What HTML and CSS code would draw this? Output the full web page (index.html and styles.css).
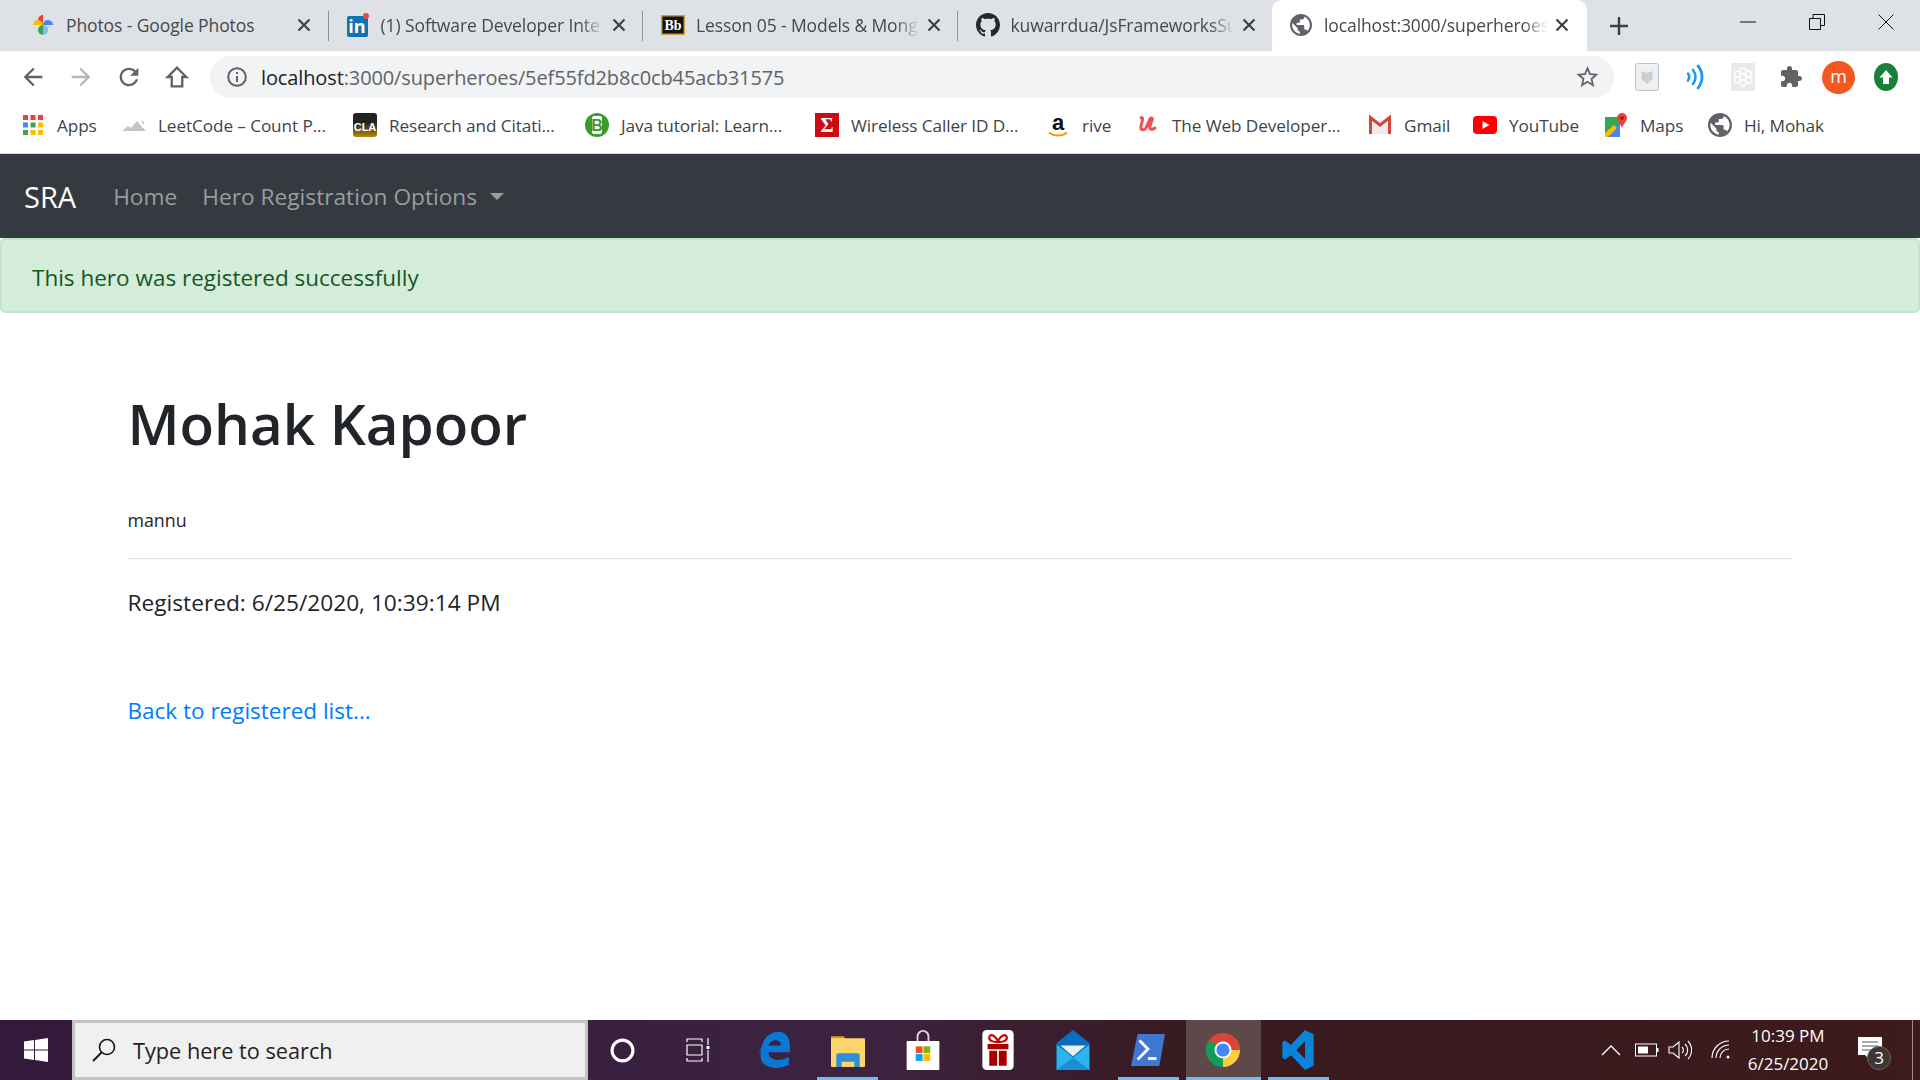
FILE: index.html
```html
<!DOCTYPE html>
<html lang="en">
<head>
    <meta charset="UTF-8">
    <title>SRA</title>
    <link rel="stylesheet" href="styles.css">
</head>
<body>
<svg class="defs" width="0" height="0">
    <symbol id="globe" viewBox="2 2 20 20"><path d="M12 2C6.48 2 2 6.48 2 12s4.48 10 10 10 10-4.48 10-10S17.52 2 12 2zm-1 17.93c-3.95-.49-7-3.85-7-7.93 0-.62.08-1.21.21-1.79L9 15v1c0 1.1.9 2 2 2v1.93zm6.9-2.54c-.26-.81-1-1.39-1.9-1.39h-1v-3c0-.55-.45-1-1-1H8v-2h2c.55 0 1-.45 1-1V7h2c1.1 0 2-.9 2-2v-.41c2.93 1.19 5 4.06 5 7.41 0 2.08-.8 3.97-2.1 5.39z"/></symbol>
    <symbol id="close" viewBox="0 0 14 14"><path d="M1.5 1.5l11 11M12.5 1.5l-11 11" fill="none" stroke="currentColor" stroke-width="2.2"/></symbol>
</svg>

<!-- tabs -->
<div class="tabstrip">
    <div class="tab">
        <svg class="tab-icon" viewBox="0 0 22 22">
            <path d="M11 11V1a5 5 0 0 0-5 5 5 5 0 0 0 5 5z" fill="#ea4335"/>
            <path d="M11 11h10a5 5 0 0 0-5-5 5 5 0 0 0-5 5z" fill="#4285f4"/>
            <path d="M11 11v10a5 5 0 0 0 5-5 5 5 0 0 0-5-5z" fill="#8ab4f8"/>
            <path d="M11 11v10a5 5 0 0 1-5-5 5 5 0 0 1 5-5z" fill="#34a853"/>
            <path d="M11 11H1a5 5 0 0 1 5-5 5 5 0 0 1 5 5z" fill="#fbbc04"/>
        </svg>
        <span class="tab-title">Photos - Google Photos</span>
        <svg class="tab-close"><use href="#close"/></svg>
    </div>
    <div class="tab">
        <svg class="tab-icon" viewBox="0 0 22 24">
            <rect x="0" y="3" width="21" height="21" rx="2" fill="#0a75b5"/>
            <text x="10" y="20" class="svg-in">in</text>
            <circle cx="19" cy="3" r="3" fill="#e8483a"/>
        </svg>
        <span class="tab-title tab-fade">(1) Software Developer Inte</span>
        <svg class="tab-close"><use href="#close"/></svg>
    </div>
    <div class="tab">
        <svg class="tab-icon tab-icon-wide" viewBox="0 0 24 20">
            <rect width="24" height="20" fill="#c9a13b"/>
            <rect x="1.5" y="1.5" width="21" height="17" fill="#111"/>
            <text x="12" y="15" class="svg-bb">Bb</text>
        </svg>
        <span class="tab-title tab-fade">Lesson 05 - Models &amp; Mong</span>
        <svg class="tab-close"><use href="#close"/></svg>
    </div>
    <div class="tab">
        <svg class="tab-icon tab-icon-wide" viewBox="0 0 16 16"><path fill="#24292e" d="M8 0C3.58 0 0 3.58 0 8c0 3.54 2.29 6.53 5.47 7.59.4.07.55-.17.55-.38 0-.19-.01-.82-.01-1.49-2.01.37-2.53-.49-2.69-.94-.09-.23-.48-.94-.82-1.13-.28-.15-.68-.52-.01-.53.63-.01 1.08.58 1.23.82.72 1.21 1.87.87 2.33.66.07-.52.28-.87.51-1.07-1.78-.2-3.64-.89-3.64-3.95 0-.87.31-1.59.82-2.15-.08-.2-.36-1.02.08-2.12 0 0 .67-.21 2.2.82.64-.18 1.32-.27 2-.27.68 0 1.36.09 2 .27 1.53-1.04 2.2-.82 2.2-.82.44 1.1.16 1.92.08 2.12.51.56.82 1.27.82 2.15 0 3.07-1.87 3.75-3.65 3.95.29.25.54.73.54 1.48 0 1.07-.01 1.93-.01 2.2 0 .21.15.46.55.38A8.013 8.013 0 0016 8c0-4.42-3.58-8-8-8z"/></svg>
        <span class="tab-title tab-fade">kuwarrdua/JsFrameworksSu</span>
        <svg class="tab-close"><use href="#close"/></svg>
    </div>
    <div class="tab tab-active">
        <svg class="tab-icon tab-globe"><use href="#globe"/></svg>
        <span class="tab-title tab-fade">localhost:3000/superheroes</span>
        <svg class="tab-close"><use href="#close"/></svg>
    </div>
    <svg class="new-tab" viewBox="0 0 18 18"><path d="M9 0v18M0 9h18" stroke="#3c4043" stroke-width="2.4" fill="none"/></svg>
    <div class="win-controls">
        <svg viewBox="0 0 16 16"><path d="M0 8h16" stroke="#111" fill="none"/></svg>
        <svg viewBox="0 0 16 16"><path d="M.5 4.500h11v11H.5zM4 4.500V.5h11.500v11h-4" stroke="#111" fill="none"/></svg>
        <svg viewBox="0 0 16 16"><path d="M.5.5l15 15M15.500.5l-15 15" stroke="#111" fill="none"/></svg>
    </div>
</div>

<!-- address bar -->
<div class="toolbar">
    <div class="nav-btns">
        <svg viewBox="0 0 24 24"><path fill="#5f6368" d="M20 11H7.83l5.59-5.59L12 4l-8 8 8 8 1.41-1.41L7.83 13H20v-2z"/></svg>
        <svg viewBox="0 0 24 24"><path fill="#b4b7ba" d="M12 4l-1.41 1.41L16.17 11H4v2h12.17l-5.58 5.59L12 20l8-8z"/></svg>
        <svg viewBox="0 0 24 24"><path fill="#5f6368" d="M17.65 6.35C16.2 4.9 14.21 4 12 4c-4.42 0-7.99 3.58-7.99 8s3.57 8 7.99 8c3.73 0 6.84-2.55 7.73-6h-2.08c-.82 2.33-3.04 4-5.65 4-3.31 0-6-2.69-6-6s2.69-6 6-6c1.66 0 3.14.69 4.22 1.78L13 11h7V4l-2.35 2.35z"/></svg>
        <svg viewBox="0 0 24 24"><path fill="none" stroke="#5f6368" stroke-width="2" d="M12 4L4 12h3.500v8h9v-8H20z"/></svg>
    </div>
    <div class="omnibox">
        <svg class="info-icon" viewBox="0 0 20 20"><circle cx="10" cy="10" r="8.800" fill="none" stroke="#5f6368" stroke-width="2"/><path d="M9 9h2v6H9zM9 5h2v2H9z" fill="#5f6368"/></svg>
        <span class="url"><span class="url-host">localhost</span>:3000/superheroes/5ef55fd2b8c0cb45acb31575</span>
        <svg class="star" viewBox="2 2 20 20"><path fill="#5f6368" d="M22 9.240l-7.190-.62L12 2 9.190 8.630 2 9.240l5.460 4.730L5.820 21 12 17.270 18.180 21l-1.630-7.030L22 9.240zM12 15.400l-3.760 2.270 1-4.280-3.320-2.880 4.380-.38L12 6.100l1.710 4.040 4.380.38-3.320 2.880 1 4.280L12 15.400z"/></svg>
    </div>
    <div class="extensions">
        <svg viewBox="0 0 24 28">
            <rect x=".5" y=".5" width="23" height="27" rx="2" fill="#eef0f1" stroke="#bcc4c9"/>
            <path d="M6.500 8l5.500 2 5.500-2v8L12 21l-5.500-5z" fill="#c9cfd3"/>
        </svg>
        <svg viewBox="0 0 24 28" fill="none" stroke="#1a9af2" stroke-linecap="round">
            <path d="M5 10.500a6 6 0 0 1 0 7" stroke-width="2.600"/>
            <path d="M10 7a11 11 0 0 1 0 14" stroke-width="2.600"/>
            <path d="M15 3a17 17 0 0 1 0 22" stroke-width="2.800"/>
        </svg>
        <svg viewBox="0 0 24 28">
            <rect width="24" height="28" rx="1" fill="#e8eaeb"/>
            <g fill="none" stroke="#fff" stroke-width="1.300">
                <circle cx="12" cy="14" r="3"/><circle cx="12" cy="8" r="3"/><circle cx="12" cy="20" r="3"/>
                <circle cx="6.500" cy="11" r="3"/><circle cx="17.500" cy="11" r="3"/><circle cx="6.500" cy="17" r="3"/><circle cx="17.500" cy="17" r="3"/>
            </g>
        </svg>
        <svg viewBox="0 -2 24 28"><path fill="#5f6368" d="M20.500 11H19V7c0-1.100-.9-2-2-2h-4V3.500C13 2.120 11.880 1 10.500 1S8 2.120 8 3.500V5H4c-1.100 0-1.990.9-1.990 2v3.800H3.500c1.490 0 2.700 1.210 2.700 2.700s-1.210 2.700-2.700 2.700H2V20c0 1.100.9 2 2 2h3.800v-1.500c0-1.490 1.210-2.700 2.700-2.700 1.490 0 2.700 1.210 2.700 2.700V22H17c1.100 0 2-.9 2-2v-4h1.500c1.380 0 2.500-1.120 2.500-2.500S21.880 11 20.500 11z"/></svg>
        <span class="avatar">m</span>
        <svg viewBox="0 0 24 28"><ellipse cx="12" cy="14" rx="12" ry="14" fill="#188038"/><path d="M12 7l6.500 7.500H15V21H9v-6.500H5.500z" fill="#fff"/></svg>
    </div>
</div>

<!-- bookmarks -->
<div class="bookmarks">
    <a class="bm">
        <svg class="bm-icon" viewBox="0 0 20 20">
            <g fill="#ea4335"><rect width="5" height="5"/><rect x="7.500" width="5" height="5"/><rect x="15" width="5" height="5"/></g>
            <g fill="#4285f4"><rect y="7.500" width="5" height="5"/><rect x="7.500" y="7.500" width="5" height="5" fill="#34a853"/><rect x="15" y="7.500" width="5" height="5" fill="#fbbc04"/></g>
            <g fill="#34a853"><rect y="15" width="5" height="5"/><rect x="7.500" y="15" width="5" height="5" fill="#fbbc04"/><rect x="15" y="15" width="5" height="5" fill="#fbbc04"/></g>
        </svg>
        <span>Apps</span>
    </a>
    <a class="bm">
        <svg class="bm-icon bm-icon-wide" viewBox="0 -6 24 24"><path d="M0 12l6-5 3 2 6-7 5 6 4 4z" fill="#c3c6c9"/><path d="M20 2l2 3" stroke="#6fb6c9" fill="none"/></svg>
        <span>LeetCode – Count P...</span>
    </a>
    <a class="bm">
        <svg class="bm-icon bm-icon-wide" viewBox="0 0 24 24"><defs><linearGradient id="cla" x2="0" y2="1"><stop offset=".4" stop-color="#222"/><stop offset="1" stop-color="#b8860b"/></linearGradient></defs><rect width="24" height="24" rx="3" fill="url(#cla)"/><text x="12" y="18" class="svg-cla">CLA</text></svg>
        <span>Research and Citati...</span>
    </a>
    <a class="bm">
        <svg class="bm-icon bm-icon-wide" viewBox="0 0 24 24"><circle cx="12" cy="12" r="12" fill="#3c9a2f"/><rect x="7" y="3" width="10" height="18" rx="2" fill="#fff"/><text x="12" y="18" class="svg-b">B</text></svg>
        <span>Java tutorial: Learn...</span>
    </a>
    <a class="bm">
        <svg class="bm-icon bm-icon-wide" viewBox="0 0 24 24"><rect width="24" height="24" fill="#cc0a12"/><text x="12" y="19" class="svg-sigma">Σ</text></svg>
        <span>Wireless Caller ID D...</span>
    </a>
    <a class="bm">
        <svg class="bm-icon bm-icon-tall" viewBox="0 0 20 26"><text x="10" y="17" class="svg-amazon">a</text><path d="M1 20c5 4 13 4 18 0" stroke="#f90" stroke-width="2" fill="none"/></svg>
        <span>rive</span>
    </a>
    <a class="bm">
        <svg class="bm-icon" viewBox="0 0 20 20"><path d="M3 3c1-1 2 0 1.500 2L3 11c-1 4 3 5 5 2l4-9c1-2 3-1 2 1l-2 6c-1 4 2 4 5 2" fill="none" stroke="#ec5252" stroke-width="3" stroke-linecap="round"/></svg>
        <span>The Web Developer...</span>
    </a>
    <a class="bm">
        <svg class="bm-icon bm-icon-wide" viewBox="-1 -2 24 24"><path d="M2 3l9 8 9-8v16H2z" fill="#ececec"/><path d="M1.500 19V2.500L11 10l9.500-7.500V19" fill="none" stroke="#d44638" stroke-width="3"/></svg>
        <span>Gmail</span>
    </a>
    <a class="bm">
        <svg class="bm-icon bm-icon-wide" viewBox="0 -3 24 24"><rect width="24" height="18" rx="4" fill="#f00"/><path d="M9.500 5l7 4-7 4z" fill="#fff"/></svg>
        <span>YouTube</span>
    </a>
    <a class="bm">
        <svg class="bm-icon bm-icon-wide" viewBox="-1 0 24 24">
            <path d="M0 4h15v20H0z" fill="#35a853"/><path d="M0 24l15-14v14z" fill="#4285f4"/><path d="M0 20l9-8 3 3-9 9H0z" fill="#fbbc04"/>
            <path d="M17 0a5 5 0 0 1 5 5c0 3-3 5-5 10-2-5-5-7-5-10a5 5 0 0 1 5-5z" fill="#ea4335"/><circle cx="17" cy="5" r="1.800" fill="#8b1a12"/>
        </svg>
        <span>Maps</span>
    </a>
    <a class="bm">
        <svg class="bm-icon bm-icon-wide tab-globe"><use href="#globe"/></svg>
        <span>Hi, Mohak</span>
    </a>
</div>

<!-- the page -->
<nav class="navbar">
    <a class="brand">SRA</a>
    <a class="nav-link">Home</a>
    <a class="nav-link dropdown">Hero Registration Options</a>
</nav>
<div class="alert">This hero was registered successfully</div>
<main class="container">
    <h1>Mohak Kapoor</h1>
    <p class="alias">mannu</p>
    <hr>
    <p class="registered">Registered: 6/25/2020, 10:39:14 PM</p>
    <a class="back-link">Back to registered list...</a>
</main>

<!-- windows taskbar -->
<footer class="taskbar">
    <svg class="start" viewBox="0 0 24 24"><path fill="#fff" d="M0 3.500l10-1.400V11.500H0zM11 2l13-2v11.500H11zM0 12.500h10v9.400L0 20.500zM11 12.500h13V24l-13-2z"/></svg>
    <div class="search">
        <svg class="search-icon" viewBox="0 0 24 24"><circle cx="15" cy="9" r="7.500" fill="none" stroke="#111" stroke-width="1.600"/><path d="M9.500 14.500L1 23" stroke="#111" stroke-width="1.800"/></svg>
        <span>Type here to search</span>
    </div>
    <div class="task-icons">
        <div class="task"><svg class="ti-small" viewBox="0 0 24 24"><circle cx="12" cy="12" r="10" fill="none" stroke="#fff" stroke-width="3"/></svg></div>
        <div class="task"><svg class="ti" viewBox="0 0 24 24" fill="none" stroke="#fff" stroke-width="1.200"><path d="M1 4V1h15v3M1 20v3h15v-3M1 7h15v10H1zM22 0v7M22 12v12"/><rect x="20.500" y="8" width="3" height="3" fill="#fff" stroke="none"/></svg></div>
        <div class="task"><svg class="ti-big" viewBox="0 0 30 34"><path d="M5 14C7 5 14 1 20 1c6 0 10 5 10 13v5H11c0 7 9 9 18 4v7c-9 5-25 4-25-8 0-3 1-5 3-7-1 1-3 3-4 5 0-2 1-4 2-6zm6-1h11c0-6-9-6-11 0z" fill="#0a78d7"/></svg></div>
        <div class="task task-open"><svg class="ti-big" viewBox="0 0 32 32"><path d="M0 3h12l2 3H0z" fill="#dc9f12"/><rect y="5" width="32" height="27" rx="1" fill="#fcd56b"/><path d="M5 32V21a2 2 0 0 1 2-2h18a2 2 0 0 1 2 2v11h-5v-5H10v5z" fill="#2e8fd8"/></svg></div>
        <div class="task"><svg class="ti-big" viewBox="0 0 36 44">
            <path d="M12 14V7a6 6 0 0 1 12 0v7" fill="none" stroke="#ddd" stroke-width="2"/>
            <rect y="12" width="36" height="32" rx="1" fill="#fff"/>
            <rect x="10" y="18" width="7.500" height="7.500" fill="#f25022"/><rect x="18.500" y="18" width="7.500" height="7.500" fill="#7fba00"/>
            <rect x="10" y="26.500" width="7.500" height="7.500" fill="#00a4ef"/><rect x="18.500" y="26.500" width="7.500" height="7.500" fill="#ffb900"/>
        </svg></div>
        <div class="task"><svg class="ti-big" viewBox="0 0 36 46">
            <rect width="36" height="46" rx="5" fill="#fff"/>
            <path d="M6 16h24v6H6zM8 24h9v17H8zM19 24h9v17h-9z" fill="#a80000"/>
            <path d="M18 14c-2-8-9-10-10-6s4 6 10 6c6 0 11-2 10-6s-8-2-10 6z" fill="none" stroke="#c00" stroke-width="2.500"/>
        </svg></div>
        <div class="task"><svg class="ti-big" viewBox="0 0 36 44">
            <path d="M0 14L18 0l18 14v30H0z" fill="#0a6cbd"/>
            <path d="M4 17h28l-14 12z" fill="#eee"/>
            <path d="M0 16l18 14 18-14v28H0z" fill="#2cb5ea"/>
            <path d="M36 44H0l18-14z" fill="#1a8fd6"/>
        </svg></div>
        <div class="task task-open"><svg class="ti-big" viewBox="0 0 36 36"><path d="M7 1h29l-6 34H0z" fill="#3f77d2"/><path d="M9 8l9 9-11 11" fill="none" stroke="#fff" stroke-width="3"/><path d="M18 27h9" stroke="#fff" stroke-width="3"/></svg></div>
        <div class="task task-open task-active"><svg class="ti-big" viewBox="0 0 32 32">
            <circle cx="16" cy="16" r="16" fill="#db4437"/>
            <path d="M16 16L2.100 24A16 16 0 0 1 3 6.500z" fill="#0f9d58"/>
            <path d="M16 16l-13.900 8A16 16 0 0 0 16 32l8-14z" fill="#0f9d58"/>
            <path d="M16 16h16a16 16 0 0 1-16 16z" fill="#ffcd40"/>
            <path d="M16 9h15l1 7H16z" fill="#db4437"/>
            <circle cx="16" cy="16" r="8" fill="#fff"/><circle cx="16" cy="16" r="6.200" fill="#4285f4"/>
        </svg></div>
        <div class="task task-open"><svg class="ti-big" viewBox="0 0 36 46"><path d="M26 0l10 5v36l-10 5-16-17-7 5-3-2V14l3-2 7 5zM26 13l-10 10 10 10z" fill="#0a84d8"/></svg></div>
    </div>
    <div class="tray">
        <svg class="tray-up" viewBox="0 0 20 12"><path d="M1 11l9-9 9 9" fill="none" stroke="#fff" stroke-width="1.300"/></svg>
        <svg class="tray-batt" viewBox="0 0 24 14"><rect x=".5" y="1" width="21" height="12" fill="none" stroke="#fff"/><rect x="3" y="3.500" width="10" height="7" fill="#fff"/><rect x="22" y="5" width="1.500" height="4" fill="#fff"/></svg>
        <svg class="tray-vol" viewBox="0 0 24 20" fill="none" stroke="#fff" stroke-width="1.100"><path d="M1 7h4l6-5v16l-6-5H1zM14 7a4 4 0 0 1 0 6M17 4a8 8 0 0 1 0 12M20 1a13 13 0 0 1 0 18"/></svg>
        <svg class="tray-wifi" viewBox="0 0 20 20" fill="none" stroke="#fff" stroke-width="1.200"><path d="M1 18A17 17 0 0 1 18 1M5 18A13 13 0 0 1 18 5M9 18a9 9 0 0 1 9-9"/><circle cx="17" cy="17" r="1.500" fill="#fff" stroke="none"/></svg>
        <div class="clock"><div>10:39 PM</div><div>6/25/2020</div></div>
        <div class="notif">
            <svg viewBox="0 0 24 26"><path d="M0 0h24v18H14l-1 0 0 6-6-6H0z" fill="#fff"/><path d="M4 5h16M4 9h16M4 13h10" stroke="#555" stroke-width="1.100"/></svg>
            <span class="notif-count">3</span>
        </div>
        <div class="show-desktop"></div>
    </div>
</footer>
</body>
</html>
```

FILE: styles.css
```css
* {
    box-sizing: border-box;
}
html, body {
    margin: 0;
    height: 100%;
    overflow: hidden;
}
body {
    display: flex;
    flex-direction: column;
    font-family: "Open Sans", "Noto Sans", sans-serif;
    color: #212529;
    background: #fff;
}
.defs {
    display: none;
}
svg {
    display: block;
    flex: none;
}

/* tabs */
.tabstrip {
    display: flex;
    align-items: center;
    height: 51px;
    padding-left: 14px;
    background: #dee1e6;
}
.tab {
    position: relative;
    display: flex;
    align-items: center;
    width: 314.5px;
    height: 51px;
    padding: 0 0 2px 18px;
}
.tab::after {
    content: "";
    position: absolute;
    right: 0;
    top: 11px;
    height: 30px;
    border-right: 1px solid #8f9296;
}
.tab:nth-child(4)::after, .tab-active::after {
    display: none;
}
.tab-active {
    background: #fff;
    border-radius: 10px 10px 0 0;
}
.tab-icon {
    width: 22px;
    height: 24px;
    margin-right: 12px;
}
.tab-icon-wide {
    width: 24px;
    margin-right: 11px;
}
.tab-globe {
    fill: #5f6368;
    height: 22px;
}
.tab-title {
    width: 226px;
    font-size: 17.5px;
    letter-spacing: -.1px;
    color: #45494f;
    white-space: nowrap;
    overflow: hidden;
}
.tab-fade {
    -webkit-mask-image: linear-gradient(to right, #000 88%, transparent 99%);
    mask-image: linear-gradient(to right, #000 88%, transparent 99%);
}
.tab-close {
    width: 14px;
    height: 14px;
    margin-left: 5px;
    color: #3c4043;
}
.new-tab {
    width: 18px;
    height: 18px;
    margin-left: 23px;
}
.win-controls {
    display: flex;
    gap: 53px;
    margin-left: auto;
    padding: 0 26px 8px 0;
}
.win-controls svg {
    width: 16px;
    height: 16px;
}

/* toolbar */
.toolbar {
    display: flex;
    align-items: center;
    height: 52px;
    background: #fff;
}
.nav-btns {
    display: flex;
    gap: 20px;
    padding-left: 19px;
    width: 210px;
}
.nav-btns svg {
    width: 28px;
    height: 28px;
}
.omnibox {
    display: flex;
    align-items: center;
    width: 1404px;
    height: 42px;
    padding: 0 15px 0 17px;
    background: #f1f3f4;
    border-radius: 21px;
}
.info-icon {
    width: 20px;
    height: 20px;
    margin-right: 14px;
}
.url {
    flex: 1;
    padding-top: 1px;
    font-size: 20px;
    letter-spacing: -.12px;
    color: #5f6368;
}
.url-host {
    color: #202124;
}
.star {
    width: 23px;
    height: 22px;
}
.extensions {
    display: flex;
    align-items: center;
    gap: 24px;
    padding-left: 21px;
}
.extensions svg {
    width: 24px;
    height: 28px;
}
.avatar {
    width: 33px;
    height: 33px;
    margin: 0 -5px;
    border-radius: 50%;
    background: #f4581f;
    color: #fff;
    font-size: 18px;
    line-height: 31px;
    text-align: center;
}

/* bookmarks */
.bookmarks {
    display: grid;
    grid-template-columns: 99px 231px 232px 230px 233px 90px 230px 105px 131px 104px auto;
    align-items: center;
    height: 51px;
    padding: 0 0 6px 23px;
    background: #fff;
    border-bottom: 1px solid #d5d7da;
}
.bm {
    display: flex;
    align-items: center;
    gap: 14px;
    font-size: 17.2px;
    letter-spacing: -.1px;
    color: #3f4348;
    white-space: nowrap;
}
.bm-icon {
    width: 20px;
    height: 22px;
}
.bm-icon-wide {
    width: 24px;
    height: 24px;
    margin-right: -2px;
}
.bm-icon-tall {
    height: 27px;
}

/* the page */
.navbar {
    display: flex;
    align-items: center;
    height: 84px;
    padding: 0 24px;
    background: #343a40;
}
.brand {
    margin-right: 37px;
    font-size: 29px;
    color: #fff;
}
.nav-link {
    margin-right: 25px;
    font-size: 22.7px;
    color: #9a9da0;
}
.dropdown::after {
    content: "";
    display: inline-block;
    margin-left: 13px;
    vertical-align: 5px;
    border-top: 7px solid;
    border-left: 7px solid transparent;
    border-right: 7px solid transparent;
}
.alert {
    height: 75px;
    padding: 20px 30px 0;
    font-size: 22.5px;
    line-height: 36px;
    color: #155724;
    background: #d4edda;
    border: 2px solid #c3e6cb;
    border-radius: 5px;
}
.container {
    flex: 1;
    padding: 0 128px 0 127.5px;
}
h1 {
    margin: 69px 0 0;
    font-size: 56.5px;
    font-weight: 600;
    line-height: 84px;
}
.alias {
    margin: 39px 0 0;
    font-size: 17.8px;
    line-height: 30px;
}
hr {
    margin: 23px 0 0;
    border: 0;
    border-top: 1px solid #dedfe0;
}
.registered {
    margin: 26px 0 0;
    font-size: 22.7px;
    line-height: 36px;
}
.back-link {
    display: block;
    margin-top: 72px;
    font-size: 22.5px;
    line-height: 36px;
    color: #007bff;
}

/* taskbar */
.taskbar {
    display: flex;
    align-items: center;
    height: 60px;
    background: linear-gradient(to right, #33193a, #3c2340 45%, #381a20 62%, #3d1a1c);
}
.start {
    width: 24px;
    height: 24px;
    margin: 0 24px;
}
.search {
    display: flex;
    align-items: center;
    gap: 17px;
    width: 516px;
    height: 60px;
    padding-left: 17px;
    background: #f0f0f0;
    border: 3px solid #c4c4c4;
    font-size: 21.7px;
    color: #222;
}
.search-icon {
    width: 24px;
    height: 24px;
}
.task-icons {
    display: flex;
    height: 60px;
}
.task {
    position: relative;
    display: flex;
    align-items: center;
    justify-content: center;
    width: 75.1px;
    height: 60px;
}
.task:first-child {
    margin-left: -3px;
}
.task-open::after {
    content: "";
    position: absolute;
    left: 7px;
    right: 7px;
    bottom: 0;
    height: 3px;
    background: #76b9ed;
}
.task-active {
    background: #5e4849;
}
.task-active::after {
    left: 0;
    right: 0;
}
.ti-small {
    width: 25px;
    height: 25px;
}
.ti {
    width: 24px;
    height: 28px;
}
.ti-big {
    width: 34px;
    height: 40px;
}
.tray {
    display: flex;
    align-items: center;
    margin-left: auto;
    height: 60px;
    color: #fff;
}
.tray-up {
    width: 20px;
    height: 12px;
    margin-right: 14px;
}
.tray-batt {
    width: 24px;
    height: 14px;
    margin-right: 9px;
}
.tray-vol {
    width: 24px;
    height: 20px;
    margin-right: 19px;
}
.tray-wifi {
    width: 20px;
    height: 20px;
}
.clock {
    width: 116px;
    margin-left: -1px;
    font-size: 17px;
    line-height: 28px;
    text-align: center;
}
.notif {
    position: relative;
    width: 40px;
    margin-left: 12px;
}
.notif svg {
    width: 24px;
    height: 26px;
}
.notif-count {
    position: absolute;
    left: 9px;
    top: 9px;
    width: 24px;
    height: 24px;
    border: 1px solid #6a6263;
    border-radius: 50%;
    background: #3c3636;
    font-size: 17px;
    line-height: 21px;
    text-align: center;
}
.show-desktop {
    width: 8px;
    height: 60px;
    margin-left: 14px;
    border-left: 1px solid #9a8b8c;
}

/* letters inside the favicons */
.svg-in {
    font: bold 18px "Open Sans", sans-serif;
    fill: #fff;
    text-anchor: middle;
}
.svg-bb {
    font: bold 14px "Liberation Serif", serif;
    fill: #fff;
    text-anchor: middle;
}
.svg-cla {
    font: bold 11px "Liberation Sans", sans-serif;
    fill: #fff;
    text-anchor: middle;
}
.svg-b {
    font: bold 16px "Liberation Sans", sans-serif;
    fill: #3c9a2f;
    text-anchor: middle;
}
.svg-sigma {
    font: bold 20px "Liberation Serif", serif;
    fill: #fff;
    text-anchor: middle;
}
.svg-amazon {
    font: bold 22px "Liberation Sans", sans-serif;
    fill: #111;
    text-anchor: middle;
}
```
